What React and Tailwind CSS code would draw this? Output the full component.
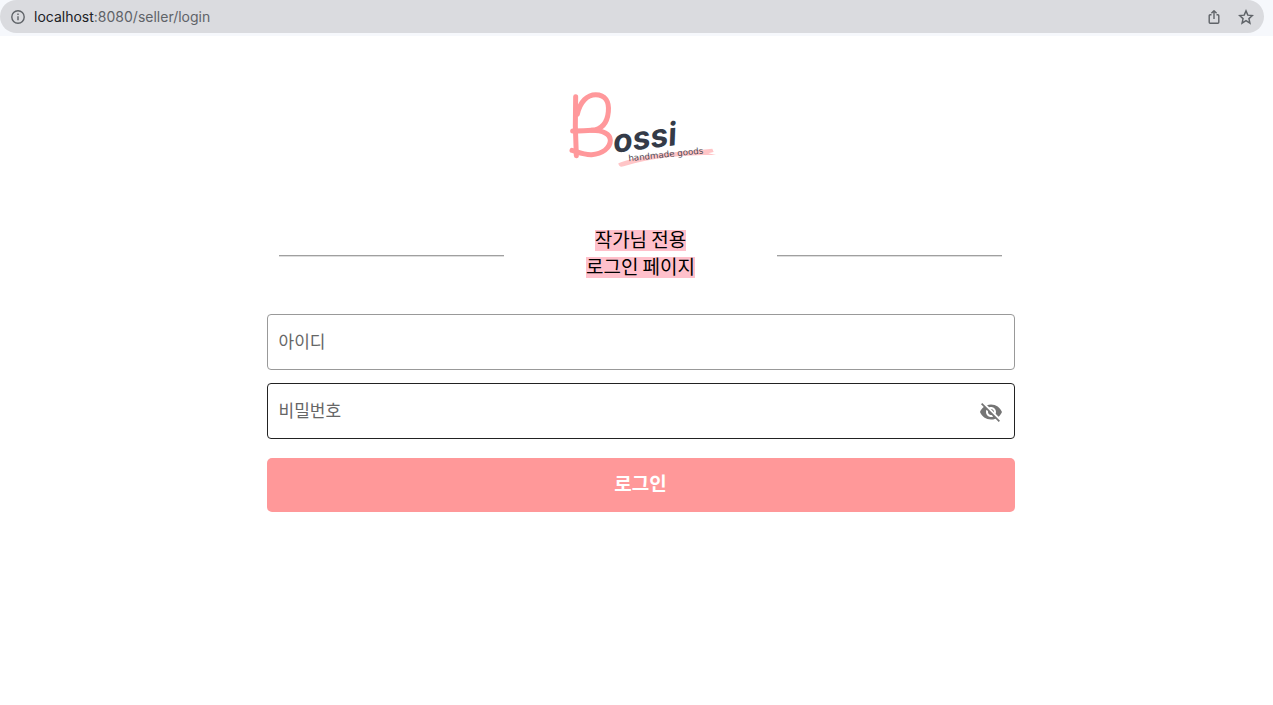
import { useState } from "react";

const korean = "font-['Noto_Sans_CJK_KR','Noto_Sans',sans-serif]";

function AddressBar() {
  return (
    <header className="bg-[#f6f8fc] pr-[9px] pb-[3px]">
      <div className="flex h-[33px] items-center rounded-r-full rounded-l-full bg-[#dadbdf] pr-[10px] pl-[10px] text-[#5f6368]">
        <svg viewBox="0 0 16 16" className="size-4" fill="none" stroke="currentColor" aria-hidden="true">
          <circle cx="8" cy="8" r="6.2" strokeWidth="1.4" />
          <path d="M8 7.2v4" strokeWidth="1.4" />
          <path d="M8 4.6v1.5" strokeWidth="1.4" />
        </svg>
        <p className="ml-2 flex-1 font-['Inter',sans-serif] text-sm">
          <span className="text-[#202124]">localhost</span>:8080/seller/login
        </p>
        <button type="button" aria-label="공유" className="mr-4">
          <svg viewBox="0 0 16 16" className="size-4" fill="none" stroke="currentColor" strokeWidth="1.4" strokeLinejoin="round">
            <path d="M5.5 5.8H4.2a1 1 0 0 0-1 1v6.4a1 1 0 0 0 1 1h7.6a1 1 0 0 0 1-1V6.8a1 1 0 0 0-1-1h-1.3" />
            <path d="M8 10V1.8M5.4 4.3 8 1.7l2.6 2.6" />
          </svg>
        </button>
        <button type="button" aria-label="북마크">
          <svg viewBox="0 0 24 24" className="size-4" fill="none" stroke="currentColor" strokeWidth="2.2" strokeLinejoin="miter">
            <path d="m12 2.8 2.7 6.4 6.9.6-5.2 4.6 1.5 6.8-5.9-3.6-5.9 3.6 1.5-6.8-5.2-4.6 6.9-.6z" />
          </svg>
        </button>
      </div>
    </header>
  );
}

function Logo() {
  return (
    <svg viewBox="31 30 450 240" className="h-20 w-[150px]" role="img" aria-label="Bossi handmade goods">
      <path d="M188 250C240 227 350 216 470 206L474 216 458 220 482 225C380 225 290 232 204 259Q190 264 188 250Z" fill="#ffc5c7" />
      <g fill="none" stroke="#ff989b" strokeWidth="15" strokeLinecap="round" strokeLinejoin="round">
        <path d="M60 50Q57 140 62 227" />
        <path d="M65 103C73 64 96 44 120 44C149 44 161 65 158 95C155 127 140 148 108 151C88 153 67 153 51 153" />
        <path d="M108 151C142 151 164 162 164 181C164 204 140 222 108 224C84 225 64 215 49 211" />
      </g>
      <text x="176" y="218" fontSize="96" fontFamily="'Inter', sans-serif" fontWeight="700" fontStyle="italic" fill="#343b48" transform="rotate(-7 176 218)">ossi</text>
      <text x="219" y="244" fontSize="26" fontFamily="'DejaVu Sans', sans-serif" fill="#4d4a55" transform="rotate(-6 219 244)">handmade goods</text>
    </svg>
  );
}

function Title() {
  return (
    <div className="flex items-center justify-between px-3">
      <hr className="mt-1 h-[2px] w-[225px] border-t border-[#a0a0a0] bg-[#dedede]" />
      <h1 className={`flex flex-col items-center gap-[6px] text-[19px] leading-[17px] text-black ${korean}`}>
        <span className="bg-[#ffc0cb] pb-1">작가님 전용</span>
        <span className="bg-[#ffc0cb] pb-1">로그인 페이지</span>
      </h1>
      <hr className="mt-1 h-[2px] w-[225px] border-t border-[#a0a0a0] bg-[#dedede]" />
    </div>
  );
}

export default function App() {
  const [visible, setVisible] = useState(false);
  return (
    <div className="min-h-screen bg-white">
      <AddressBar />
      <main className="pt-[54px] pl-2">
        <div className="mx-auto flex max-w-[748px] flex-col">
          <div className="flex justify-center">
            <Logo />
          </div>
          <form className="mt-[60px] flex flex-col" onSubmit={(e) => e.preventDefault()}>
            <Title />
            <input
              type="text"
              aria-label="아이디"
              placeholder="아이디"
              className={`mt-9 h-14 w-full rounded border border-[#999] px-[11px] pb-1 text-[17px] placeholder:text-[#666] ${korean}`}
            />
            <div className="mt-[13px] flex h-14 items-center rounded border border-[#222] pr-[11px]">
              <input
                type={visible ? "text" : "password"}
                aria-label="비밀번호"
                placeholder="비밀번호"
                className={`h-full min-w-0 flex-1 px-[11px] pb-1 text-[17px] outline-none placeholder:text-[#666] ${korean}`}
              />
              <button type="button" aria-label="비밀번호 표시" onClick={() => setVisible(!visible)} className="mt-[2px] text-[#757575]">
                <svg viewBox="0 0 24 24" className="size-6" fill="currentColor">
                  <path d="M12 7c2.76 0 5 2.24 5 5 0 .65-.13 1.26-.36 1.83l2.92 2.92c1.51-1.26 2.7-2.89 3.43-4.75-1.73-4.39-6-7.5-11-7.5-1.4 0-2.74.25-3.98.7l2.16 2.16C10.74 7.13 11.35 7 12 7zM2 4.27l2.28 2.28.46.46C3.08 8.3 1.78 10.02 1 12c1.73 4.39 6 7.5 11 7.5 1.55 0 3.03-.3 4.38-.84l.42.42L19.73 22 21 20.73 3.27 3 2 4.27zM7.53 9.8l1.55 1.55c-.05.21-.08.43-.08.65 0 1.66 1.34 3 3 3 .22 0 .44-.03.65-.08l1.55 1.55c-.67.33-1.41.53-2.2.53-2.76 0-5-2.24-5-5 0-.79.2-1.53.53-2.2zm4.31-.78 3.15 3.15.02-.16c0-1.66-1.34-3-3-3l-.17.01z" />
                </svg>
              </button>
            </div>
            <button type="submit" className={`mt-[19px] h-[54px] w-full rounded-[5px] bg-[#ff9899] pb-1 text-[19px] font-bold text-white ${korean}`}>
              로그인
            </button>
          </form>
        </div>
      </main>
    </div>
  );
}
